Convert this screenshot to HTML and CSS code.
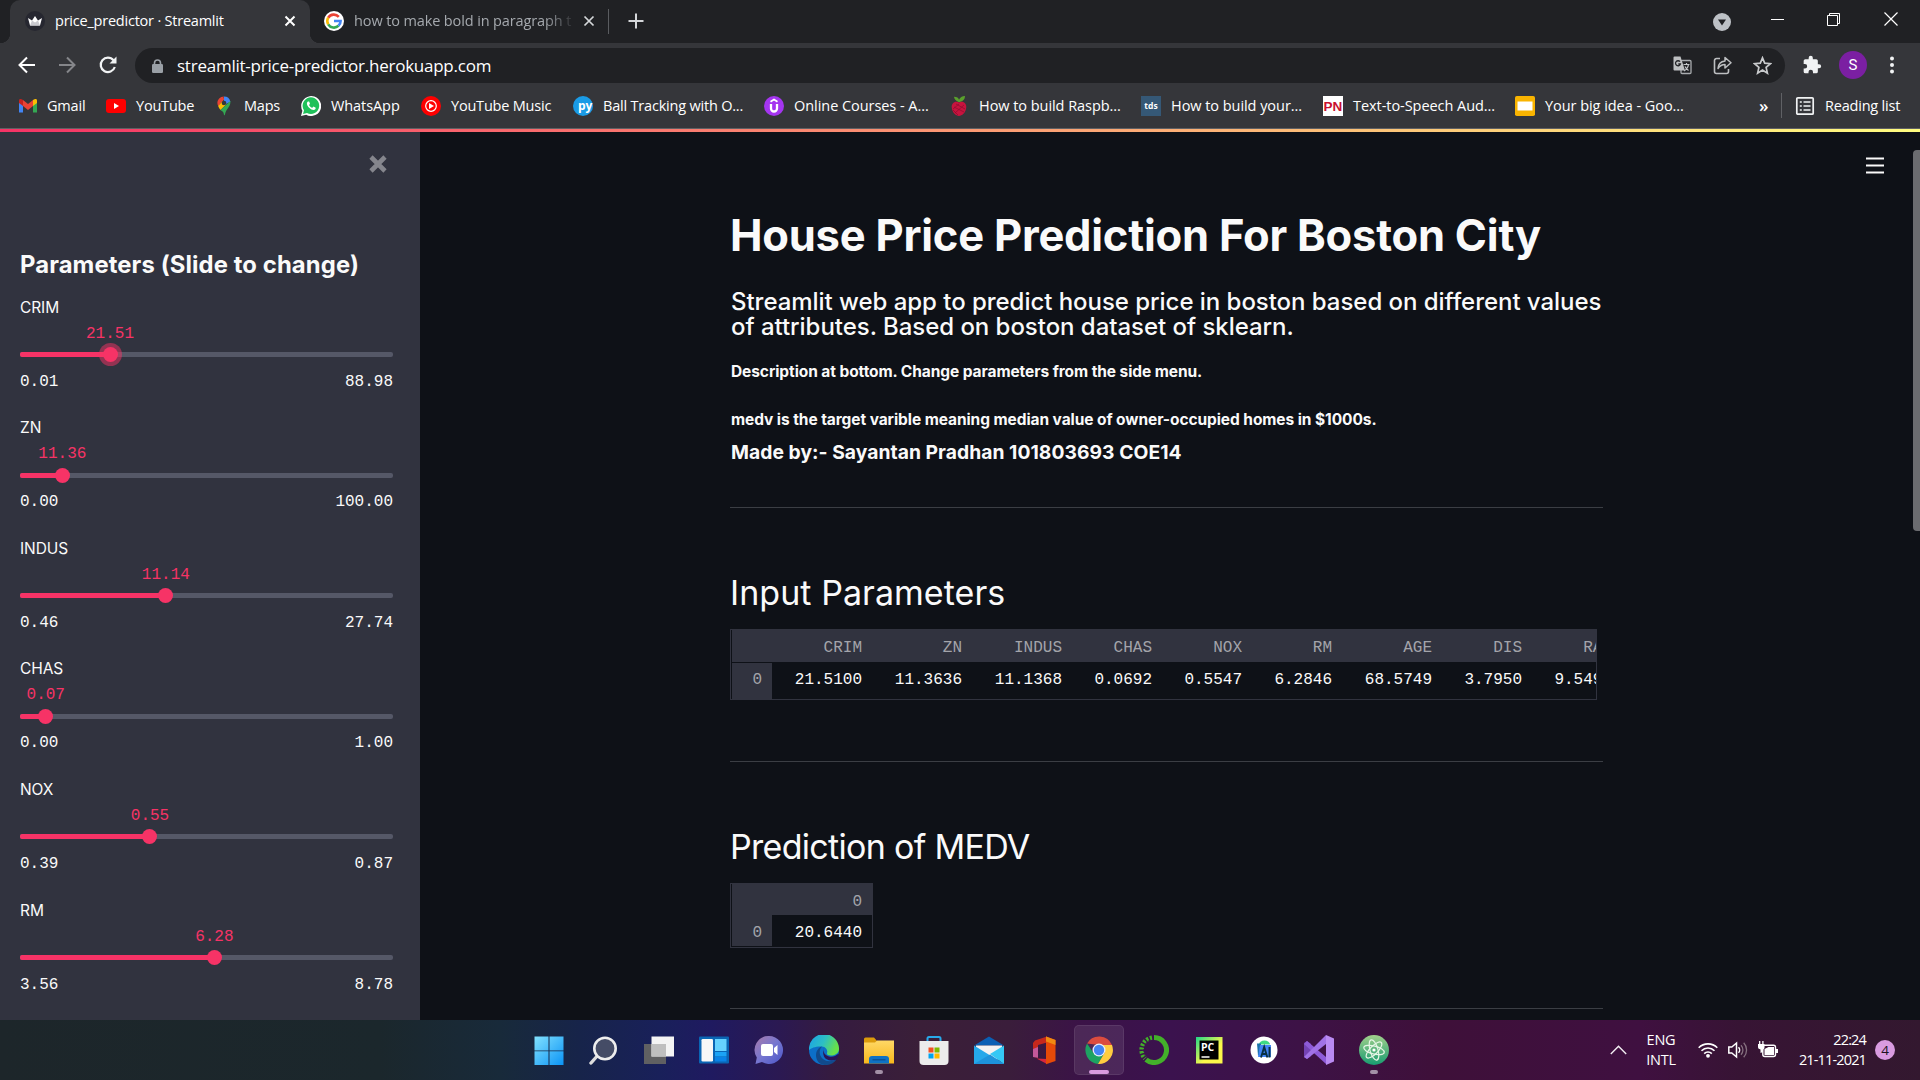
FILE: index.html
```html
<!DOCTYPE html>
<html lang="en">
<head>
<meta charset="utf-8">
<title>price_predictor · Streamlit</title>
<link rel="stylesheet" href="styles.css">
</head>
<body>
<header class="tabs">
  <div class="tab tab-active">
    <svg class="favicon" viewBox="0 0 20 20"><circle cx="10" cy="10" r="10" fill="#262730"/><path d="M3 7l4 2.500 3-4.500 3 4.500 4-2.500-2 7.500H5z" fill="#fff"/><path d="M5 14.500l2-5 3 2 3-2 2 5z" fill="#c9c9cf"/></svg>
    <span class="tab-title">price_predictor · Streamlit</span>
    <svg class="tab-close" viewBox="0 0 12 12"><path d="M1.500 1.500l9 9M10.500 1.500l-9 9" stroke="#fff" stroke-width="2"/></svg>
  </div>
  <div class="tab tab-idle">
    <svg class="favicon" viewBox="0 0 20 20"><circle cx="10" cy="10" r="10" fill="#fff"/><path d="M14.800 5.800A6.700 6.700 0 0 0 4.200 6.700" stroke="#ea4335" stroke-width="2.600" fill="none"/><path d="M4.200 6.700a6.700 6.700 0 0 0 0 6.600" stroke="#fbbc05" stroke-width="2.600" fill="none"/><path d="M4.200 13.300a6.700 6.700 0 0 0 10.300 1.500" stroke="#34a853" stroke-width="2.600" fill="none"/><path d="M14.500 14.800A6.500 6.500 0 0 0 16.600 10H10" stroke="#4285f4" stroke-width="2.600" fill="none"/></svg>
    <span class="tab-title">how to make bold in paragraph t</span>
    <svg class="tab-close" viewBox="0 0 12 12"><path d="M1.500 1.500l9 9M10.500 1.500l-9 9" stroke="#d5d7da" stroke-width="1.700"/></svg>
  </div>
  <i class="tab-divider"></i>
  <svg class="tab-new" viewBox="0 0 16 16"><path d="M8 .5v15M.5 8h15" stroke="#d5d7da" stroke-width="2"/></svg>
  <div class="window-controls">
    <svg width="18" height="18" viewBox="0 0 18 18"><circle cx="9" cy="9" r="9" fill="#bdc1c6"/><path d="M5 6.500h8l-4 6z" fill="#202124"/></svg>
    <svg class="raised" width="13" height="14" viewBox="0 0 13 14"><path d="M0 7.500h13" stroke="#fff"/></svg>
    <svg class="raised" width="13" height="13" viewBox="0 0 13 13"><path d="M.5 2.500h10v10H.5zM2.500 2.500v-2h10v10h-2" fill="none" stroke="#fff"/></svg>
    <svg class="raised" width="14" height="14" viewBox="0 0 14 14"><path d="M.5.5l13 13M13.500.5l-13 13" stroke="#fff" stroke-width="1.200"/></svg>
  </div>
</header>

<div class="toolbar">
  <div class="nav-buttons">
    <svg width="18" height="18" viewBox="0 0 18 18"><path d="M17 9H2M9 1.500L1.500 9 9 16.500" fill="none" stroke="#fff" stroke-width="2"/></svg>
    <svg width="18" height="18" viewBox="0 0 18 18"><path d="M1 9h15M9 1.500L16.500 9 9 16.500" fill="none" stroke="#85868a" stroke-width="2"/></svg>
    <svg width="20" height="20" viewBox="0 0 20 20"><path d="M16.800 12A7.200 7.200 0 1 1 15.500 5.300" fill="none" stroke="#f1f3f4" stroke-width="2.200"/><path d="M18.500 1.500v7h-7z" fill="#f1f3f4"/></svg>
  </div>
  <div class="omnibox">
    <svg class="lock" viewBox="0 0 11 14"><path d="M2.500 6V4a3 3 0 0 1 6 0v2" fill="none" stroke="#9aa0a6" stroke-width="1.600"/><rect y="5" width="11" height="9" rx="1.300" fill="#9aa0a6"/></svg>
    <span class="url">streamlit-price-predictor.herokuapp.com</span>
    <svg width="19" height="19" viewBox="0 0 19 19"><rect x="8" y="4.500" width="10" height="13" rx="1" fill="#202124" stroke="#a9acaf" stroke-width="1.300"/><path d="M10.500 8.500h6M13.500 7v1.500M15.500 8.500c-.5 3-2 5-4.500 6.500M12 10.500c1 2 2 3 3.500 4" stroke="#c4c6c9" stroke-width="1.200" fill="none"/><path d="M1.500.5h6L12 14.500H1.500A1 1 0 0 1 .5 13.500v-12a1 1 0 0 1 1-1z" fill="#bdbfc1"/><path d="M7 5.700A2.500 2.500 0 1 0 7.400 8H5.300" fill="none" stroke="#26272a" stroke-width="1.300"/></svg>
    <svg width="19" height="19" viewBox="0 0 19 19"><path d="M7 2.500H3.500a2 2 0 0 0-2 2v11a2 2 0 0 0 2 2h10a2 2 0 0 0 2-2V13" fill="none" stroke="#bdbfc1" stroke-width="1.600"/><path d="M5 12.500c.3-5 3-7 7-7.500V1.500l6 5.300-6 5.200V8.500c-3 0-5 1-7 4z" fill="none" stroke="#bdbfc1" stroke-width="1.500" stroke-linejoin="round"/></svg>
    <svg width="19" height="19" viewBox="0 0 19 19"><path d="M9.500 1.800l2.200 5.300 5.800.5-4.400 3.800 1.300 5.700-4.900-3-4.900 3 1.300-5.700-4.400-3.800 5.800-.5z" fill="none" stroke="#c8cacc" stroke-width="1.700"/></svg>
  </div>
  <div class="toolbar-end">
    <svg width="20" height="20" viewBox="0 0 24 24"><path d="M20.500 11H19V7a2 2 0 0 0-2-2h-4V3.500a2.500 2.500 0 0 0-5 0V5H4a2 2 0 0 0-2 2v3.800h1.500a2.700 2.700 0 0 1 0 5.400H2V20a2 2 0 0 0 2 2h3.800v-1.500a2.700 2.700 0 0 1 5.400 0V22H17a2 2 0 0 0 2-2v-4h1.500a2.500 2.500 0 0 0 0-5z" fill="#f1f3f4"/></svg>
    <span class="avatar">S</span>
    <svg width="4" height="18" viewBox="0 0 4 18"><circle cx="2" cy="2.500" r="2" fill="#f1f3f4"/><circle cx="2" cy="9" r="2" fill="#f1f3f4"/><circle cx="2" cy="15.500" r="2" fill="#f1f3f4"/></svg>
  </div>
</div>

<nav class="bookmarks">
  <a class="bm bm-gmail"><svg viewBox="0 0 20 20"><path d="M1 4.500v12h4V9z" fill="#4285f4"/><path d="M19 4.500v12h-4V9z" fill="#34a853"/><path d="M5 4v6l5 4 5-4V4l-5 4z" fill="#ea4335"/><path d="M1 7V4.500C1 2.500 3 2.500 5 4v6z" fill="#c5221f"/><path d="M19 7V4.500c0-2-2-2-4-.5v6z" fill="#fbbc04"/></svg>Gmail</a>
  <a class="bm bm-youtube"><svg viewBox="0 0 20 20"><rect y="3" width="20" height="14" rx="3" fill="#f00"/><path d="M8 7l5 3-5 3z" fill="#fff"/></svg>YouTube</a>
  <a class="bm bm-maps"><svg viewBox="0 0 20 20"><path d="M10 .5A6.500 6.500 0 0 0 5 2.800l3 2.700z" fill="#ea4335"/><path d="M5 2.800A6.500 6.500 0 0 0 4.300 10.200l7-8.200z" fill="#ea4335"/><path d="M10 .5a6.500 6.500 0 0 1 6.400 5.200L10 9z" fill="#4285f4"/><path d="M4.200 10l4.500-5 3.500 3.500L6.500 14c-1-1.300-2-2.700-2.300-4z" fill="#fbbc04"/><path d="M6.500 14L16.300 5c.8 5-3.800 7.500-5 12-.5 2.800-1.200 3.300-1.700 0-.5-1.500-2-2-3.100-3z" fill="#34a853"/><circle cx="10" cy="7" r="2.300" fill="#35363a"/></svg>Maps</a>
  <a class="bm bm-whatsapp"><svg viewBox="0 0 20 20"><path d="M0 20l1.400-5.200A10 10 0 1 1 5.200 18.700z" fill="#fff"/><path d="M2 18l1-3.700A8.300 8.300 0 1 1 6 17z" fill="#1fc15a"/><path d="M7 5.500c-2 1.200-1 4.200 1.200 6.300 2.500 2.400 5 3 6.300 1.200l.2-1.300-2.200-1.200-1.200 1.300c-1.500-.5-2.600-1.600-3.200-2.900l.9-1.200-.9-2.200z" fill="#fff"/></svg>WhatsApp</a>
  <a class="bm bm-ytmusic"><svg viewBox="0 0 20 20"><circle cx="10" cy="10" r="10" fill="#f00"/><circle cx="10" cy="10" r="5.300" fill="none" stroke="#fff" stroke-width="1.200"/><path d="M8 7l5 3-5 3z" fill="#fff"/></svg>YouTube Music</a>
  <a class="bm bm-ball"><svg viewBox="0 0 20 20"><circle cx="10" cy="10" r="10" fill="#1a9be6"/><text x="5" y="13.500" class="glyph glyph-py">py</text></svg>Ball Tracking with O...</a>
  <a class="bm bm-udemy bm-loose"><svg viewBox="0 0 20 20"><circle cx="10" cy="10" r="10" fill="#a435f0"/><path d="M6.500 5.800L10 3.600l3.500 2.200" fill="none" stroke="#fff" stroke-width="1.800"/><path d="M7 8v4.500a3 3 0 0 0 6 0V8" fill="none" stroke="#fff" stroke-width="2.300"/></svg>Online Courses - A...</a>
  <a class="bm bm-raspb bm-loose"><svg viewBox="0 0 20 20"><path d="M9.500 6C7 5 5 3 5 .8c3 0 4.500 1 5 3C11 1.500 13 0 16 0c0 3.500-2.500 6-6.500 6z" fill="#5aa02c"/><path d="M10 6.500c4 -2 8 1 7.200 5.500C16.500 17 13 19.800 10 20c-3-.2-6.500-3-7.200-8C2 7.500 6 4.500 10 6.500z" fill="#c7133e"/><path d="M5 11l10 5M4 14l5 5M7 8l9 5M15 9l-9 8M10 8l-6 5" stroke="#8d0c2e" stroke-width=".7"/></svg>How to build Raspb...</a>
  <a class="bm bm-tds bm-loose"><svg viewBox="0 0 20 20"><path d="M0 0h20v20H0z" fill="#355876"/><text x="10" y="13" text-anchor="middle" class="glyph glyph-tds">tds</text></svg>How to build your...</a>
  <a class="bm bm-pn bm-loose"><svg viewBox="0 0 20 20"><path d="M0 0h20v20H0z" fill="#fff"/><text x="10" y="14.800" text-anchor="middle" class="glyph glyph-pn">PN</text></svg>Text-to-Speech Aud...</a>
  <a class="bm bm-slides bm-loose"><svg viewBox="0 0 20 20"><rect width="20" height="20" rx="1.800" fill="#f9b400"/><path d="M2.500 5.500h15v9h-15z" fill="#fff"/></svg>Your big idea - Goo...</a>
  <span class="bm-more">»</span>
  <i class="bm-divider"></i>
  <a class="bm"><svg viewBox="0 0 20 20"><rect x="1.800" y="1.800" width="16.400" height="16.400" rx="1" fill="none" stroke="#f1f3f4" stroke-width="1.700"/><path d="M4.800 6h2M4.800 10h2M4.800 14h2M8.500 6h7M8.500 10h7M8.500 14h7" stroke="#f1f3f4" stroke-width="1.600"/></svg>Reading list</a>
</nav>
<div class="decoration"></div>

<div class="app">
  <aside class="sidebar">
    <div class="sidebar-top"><svg class="sidebar-close" viewBox="0 0 18 18"><path d="M2 2l14 14M16 2L2 16" stroke="#85868d" stroke-width="4.600"/></svg></div>
    <h2 class="sidebar-title">Parameters (Slide to change)</h2>
    <div class="slider" style="--pos:24.13%"><div class="slider-label">CRIM</div><div class="slider-value">21.51</div><div class="track"><i class="fill"></i><i class="thumb thumb-focus"></i></div><div class="range"><span>0.01</span><span>88.98</span></div></div>
    <div class="slider" style="--pos:11.35%"><div class="slider-label">ZN</div><div class="slider-value">11.36</div><div class="track"><i class="fill"></i><i class="thumb"></i></div><div class="range"><span>0.00</span><span>100.00</span></div></div>
    <div class="slider" style="--pos:39.1%"><div class="slider-label">INDUS</div><div class="slider-value">11.14</div><div class="track"><i class="fill"></i><i class="thumb"></i></div><div class="range"><span>0.46</span><span>27.74</span></div></div>
    <div class="slider" style="--pos:6.9%"><div class="slider-label">CHAS</div><div class="slider-value">0.07</div><div class="track"><i class="fill"></i><i class="thumb"></i></div><div class="range"><span>0.00</span><span>1.00</span></div></div>
    <div class="slider" style="--pos:34.85%"><div class="slider-label">NOX</div><div class="slider-value">0.55</div><div class="track"><i class="fill"></i><i class="thumb"></i></div><div class="range"><span>0.39</span><span>0.87</span></div></div>
    <div class="slider" style="--pos:52.1%"><div class="slider-label">RM</div><div class="slider-value">6.28</div><div class="track"><i class="fill"></i><i class="thumb"></i></div><div class="range"><span>3.56</span><span>8.78</span></div></div>
  </aside>
  <main class="content">
    <h1>House Price Prediction For Boston City</h1>
    <p class="lead">Streamlit web app to predict house price in boston based on different values<br>of attributes. Based on boston dataset of sklearn.</p>
    <p class="note">Description at bottom. Change parameters from the side menu.</p>
    <p class="note note-target">medv is the target varible meaning median value of owner-occupied homes in $1000s.</p>
    <p class="author">Made by:- Sayantan Pradhan 101803693 COE14</p>
    <hr class="rule rule-intro">
    <h2 class="section-title">Input Parameters</h2>
    <div class="frame frame-input">
      <div class="row row-head"><span></span><span>CRIM</span><span>ZN</span><span>INDUS</span><span>CHAS</span><span>NOX</span><span>RM</span><span>AGE</span><span>DIS</span><span>RAD</span></div>
      <div class="row row-data"><span class="index">0</span><span>21.5100</span><span>11.3636</span><span>11.1368</span><span>0.0692</span><span>0.5547</span><span>6.2846</span><span>68.5749</span><span>3.7950</span><span>9.5494</span></div>
    </div>
    <hr class="rule rule-input">
    <h2 class="section-title section-medv">Prediction of MEDV</h2>
    <div class="frame frame-medv">
      <div class="row row-head"><span></span><span>0</span></div>
      <div class="row row-data"><span class="index">0</span><span>20.6440</span></div>
    </div>
    <hr class="rule rule-medv">
  </main>
  <div class="menu-column"><svg width="18" height="17" viewBox="0 0 18 17"><path d="M0 1.500h18M0 8.500h18M0 15.500h18" stroke="#fafafa" stroke-width="2.200"/></svg></div>
  <div class="scrollbar"><i></i></div>
</div>

<footer class="taskbar">
  <div class="dock">
    <span class="slot"><svg viewBox="0 0 30 30"><defs><linearGradient id="win" gradientUnits="userSpaceOnUse" x1="0" y1="0" x2="30" y2="30"><stop stop-color="#86e4ff"/><stop offset="1" stop-color="#0a93f5"/></linearGradient></defs><path d="M.5 1.500h14v14H.5zM15.500 1.500h14v14h-14zM.5 16.300h14v14H.5zM15.500 16.300h14v14h-14z" fill="url(#win)"/></svg></span>
    <span class="slot"><svg viewBox="0 0 30 30"><path d="M9.500 19.500L2 28" stroke="#ddd" stroke-width="3.400" stroke-linecap="round"/><circle cx="16" cy="13.500" r="10.700" fill="#454c66" stroke="#eee" stroke-width="2.600"/></svg></span>
    <span class="slot"><svg viewBox="0 0 30 30"><path d="M0 9h22v20H0z" fill="#606062"/><path d="M7.500 1.500H30v20H7.500z" fill="#f4f4f4"/><path d="M7.500 9H22v12.500H7.500z" fill="#bfbfbf"/></svg></span>
    <span class="slot"><svg viewBox="0 0 30 30"><rect y="1.500" width="30" height="27" rx="1" fill="#0a65b4"/><rect x="2.500" y="4" width="11.500" height="22.500" rx="1.300" fill="#f7f7f7"/><path d="M16 4h11.500v12H16z" fill="#66d2ff"/><path d="M16 17h11.500v4.500H16z" fill="#1ba3f5"/><path d="M16 22h11.500v4.500H16z" fill="#0a83e6"/></svg></span>
    <span class="slot"><svg viewBox="0 0 30 30"><defs><linearGradient id="chat" x2="1" y2="1"><stop stop-color="#a97aa9"/><stop offset=".5" stop-color="#7676d0"/><stop offset="1" stop-color="#4a55c8"/></linearGradient></defs><path d="M15 1a14 14 0 1 1-7 26.100L1.500 29l1.300-6.500A14 14 0 0 1 15 1z" fill="url(#chat)"/><rect x="7" y="9" width="12" height="12" rx="2" fill="#fff"/><path d="M20 13l3.500-3v10L20 17z" fill="#fff"/></svg></span>
    <span class="slot"><svg viewBox="0 0 30 30"><defs><linearGradient id="edge" x2="1" y2=".35"><stop stop-color="#1aa0e8"/><stop offset=".55" stop-color="#2dbfc4"/><stop offset="1" stop-color="#67e04a"/></linearGradient></defs><circle cx="15" cy="15" r="15" fill="#0c6fc8"/><path d="M0 15A15 15 0 0 1 30 13c.5 5-4 7.500-8 7.500-3 0-4.500-1-4-2.500 1-3-1-6-5-6.500C7 11 2 13 0 15z" fill="url(#edge)"/><path d="M13 11.500c-3 3-3.500 9 1 12.500 4 3 9 2.500 13.500.5C24 29.500 18 31 13 29.500 5 26 5 14 13 11.500z" fill="#114a8b"/><path d="M15.500 12c-2 3-1 8 4.500 9.500 3.500.8 7-.5 9-2.500l1 .5-2.500 5c-6 2-11 .5-12.500-3-1.500-3.500-.8-7 .5-9.500z" fill="#2a1457"/></svg></span>
    <span class="slot"><svg viewBox="0 0 30 30"><defs><linearGradient id="dir" x2="0" y2="1"><stop stop-color="#ffd866"/><stop offset="1" stop-color="#f8b81c"/></linearGradient></defs><path d="M0 4a1.500 1.500 0 0 1 1.500-1.500H10L13 6v6H0z" fill="#dc9b0b"/><path d="M0 7.500h11l2-2h17v23H0z" fill="url(#dir)"/><path d="M5 28.500V24a3 3 0 0 1 3-3h14a3 3 0 0 1 3 3v4.500z" fill="#0f72c4"/><path d="M8.500 24.800h13" stroke="#0a4c8e" stroke-width="1.200"/></svg><i class="dot"></i></span>
    <span class="slot"><svg viewBox="0 0 30 30"><path d="M8.500 8V3.500a1.500 1.500 0 0 1 1.500-1.500h10a1.500 1.500 0 0 1 1.500 1.500V8" fill="none" stroke="#28a9ea" stroke-width="2"/><path d="M.5 6h29v20a4 4 0 0 1-4 4h-21a4 4 0 0 1-4-4z" fill="#ececec"/><path d="M9.500 12.500h5v5h-5z" fill="#f25022"/><path d="M15.500 12.500h5v5h-5z" fill="#7fba00"/><path d="M9.500 18.500h5v5h-5z" fill="#00a4ef"/><path d="M15.500 18.500h5v5h-5z" fill="#ffb900"/></svg></span>
    <span class="slot"><svg viewBox="0 0 30 30"><path d="M0 10.500L15 1.500l15 9z" fill="#0a5fb4"/><path d="M2 10.500h26v14H2z" fill="#f2f2f2"/><path d="M0 10.500l30 18.500H0z" fill="#25a8ea"/><path d="M30 10.500v18.500L16 19z" fill="#35c8f5"/><path d="M0 29l16-9.500L30 29z" fill="#1d93dc"/></svg></span>
    <span class="slot"><svg viewBox="0 0 30 30"><path d="M18 1.500L6 5.500 4 8v14l5 .5V10l9-2.500z" fill="#c6281c"/><path d="M4 14v8l5 .8V12z" fill="#c4589a"/><path d="M7.500 23.500L18 29V24z" fill="#d8263c"/><path d="M17 1.500L26.500 5v21L17 29.300z" fill="#e64a08"/><path d="M17 1.500L26.500 5v5L17 6.500z" fill="#f08a12"/></svg></span>
    <span class="slot slot-active"><svg viewBox="0 0 30 30"><path d="M3 8.500A14 14 0 0 1 28 10H15z" fill="#db4c3f"/><path d="M3 8.500A14 14 0 0 0 14 29l6-10.500L9.500 18z" fill="#1da362"/><path d="M28 10a14 14 0 0 1-14 19l7-12-2-7z" fill="#ffcd40"/><circle cx="15" cy="15" r="6.500" fill="#e9eefb"/><circle cx="15" cy="15" r="5.200" fill="#4285f4"/></svg><i class="pill"></i></span>
    <span class="slot"><svg viewBox="0 0 30 30"><path d="M15 2.500A12.500 12.500 0 1 1 7 24.600" fill="none" stroke="#43b02a" stroke-width="5"/><path d="M13 2.600A12.500 12.500 0 0 0 6 23.500" fill="none" stroke="#43b02a" stroke-width="4.500" stroke-dasharray="2.200 1.500"/><path d="M11 5A11.500 11.500 0 0 0 6 21" fill="none" stroke="#3b124e" stroke-width="1" stroke-dasharray="2 2"/></svg></span>
    <span class="slot"><svg viewBox="0 0 30 30"><defs><linearGradient id="pyc" x2=".6" y2=".6"><stop stop-color="#21d789"/><stop offset="1" stop-color="#fcf84a"/></linearGradient></defs><path d="M2 2h26.500v26.500H2z" fill="url(#pyc)"/><path d="M5.500 5.500h19v19h-19z" fill="#000"/><text x="7" y="15.500" class="glyph glyph-pc">PC</text><path d="M7.500 22h8" stroke="#fff" stroke-width="1.500"/></svg></span>
    <span class="slot"><svg viewBox="0 0 30 30"><circle cx="15" cy="15" r="13.500" fill="#fff"/><path d="M10 9.500a5.500 4 0 0 1 11 0z" fill="#3ddc84"/><path d="M8 8.500h4v12H9z" fill="#1a73a8"/><path d="M11 10h11v12H9z" fill="#4285f4"/><path d="M12 22.500l3.200-10.500 3.200 10.500M13.200 19h4M20.500 12v10.500" stroke="#073042" stroke-width="1.900" fill="none"/></svg></span>
    <span class="slot"><svg viewBox="0 0 30 30"><path d="M0 8l3-2 4 3v12l-4 3-3-2z" fill="#7443b5"/><path d="M3 6l19 16v7L0 9z" fill="#8e5bd8"/><path d="M22 0v9L3 24l-3-2z" fill="#a172e6"/><path d="M22 0l8 3.500v23L22 30z" fill="#b98af2"/></svg></span>
    <span class="slot"><svg viewBox="0 0 30 30"><defs><linearGradient id="atom" x2="0" y2="1"><stop stop-color="#a2d08c"/><stop offset="1" stop-color="#179c70"/></linearGradient></defs><circle cx="15" cy="15" r="15" fill="url(#atom)"/><g fill="none" stroke="#e6f5e6" stroke-width="1.200"><ellipse cx="15" cy="15" rx="10.500" ry="4" transform="rotate(14 15 15)"/><ellipse cx="15" cy="15" rx="10.500" ry="4" transform="rotate(74 15 15)"/><ellipse cx="15" cy="15" rx="10.500" ry="4" transform="rotate(134 15 15)"/></g><circle cx="15" cy="15" r="1.600" fill="#fff"/></svg><i class="dot"></i></span>
  </div>
  <div class="tray">
    <svg class="tray-up" width="17" height="10" viewBox="0 0 17 10"><path d="M.8 9L8.500 1.200 16.200 9" fill="none" stroke="#f2eef2" stroke-width="1.400"/></svg>
    <div class="lang">ENG<br>INTL</div>
    <svg class="tray-wifi" width="20" height="16" viewBox="0 0 20 16"><g fill="none" stroke="#fff" stroke-width="1.600"><path d="M.7 5.800a13 13 0 0 1 18.600 0"/><path d="M3.500 8.800a9 9 0 0 1 13 0"/><path d="M6.200 11.600a5.200 5.200 0 0 1 7.600 0"/></g><circle cx="10" cy="13.800" r="1.900" fill="#fff"/></svg>
    <svg class="tray-sound" width="20" height="18" viewBox="0 0 20 18"><path d="M.8 6h3L8.500 2v14L3.800 12h-3z" fill="none" stroke="#fff" stroke-width="1.500"/><path d="M10.500 6.200a4 4 0 0 1 0 5.600" fill="none" stroke="#fff" stroke-width="1.500"/><path d="M13 4.200a7 7 0 0 1 0 9.600M15.700 1.800a10.500 10.500 0 0 1 0 14.400" fill="none" stroke="#85707f" stroke-width="1.300"/></svg>
    <svg class="tray-battery" width="20" height="18" viewBox="0 0 20 18"><rect x="4.800" y="4.200" width="12.700" height="11.300" rx="2" fill="none" stroke="#fff" stroke-width="1.400"/><path d="M6.500 8l4-2H16v8H6.500z" fill="#fff"/><path d="M18 8h2v4h-2z" fill="#fff"/><path d="M0 3h6.500v3.500a2 2 0 0 1-1.500 2V11l-2.500 1V8.500C1 8 0 7.500 0 6z" fill="#fff"/><path d="M1.700 0v3M4.900 0v3" stroke="#fff" stroke-width="1.300"/></svg>
    <div class="clock">22:24<br>21-11-2021</div>
    <span class="badge">4</span>
  </div>
</footer>
</body>
</html>
```
FILE: styles.css
```css
* { box-sizing: border-box; }
body {
  margin: 0;
  width: 1920px;
  height: 1080px;
  overflow: hidden;
  display: flex;
  flex-direction: column;
  background: #0e1117;
  color: #fafafa;
  font-family: Inter, sans-serif;
}
svg { display: block; flex: none; }
h1, h2, p { margin: 0; }

/* Tab strip */
.tabs {
  height: 43px;
  flex: none;
  display: flex;
  align-items: center;
  padding-left: 10px;
  background: #202124;
  font: 14.5px/20px "Open Sans", sans-serif;
}
.tab { display: flex; align-items: center; height: 43px; padding-bottom: 1px; }
.tab-active {
  position: relative;
  width: 300px;
  padding: 0 14px 1px 15px;
  background: #35363a;
  border-radius: 10px 10px 0 0;
  color: #fff;
}
.tab-active::before, .tab-active::after {
  content: "";
  position: absolute;
  bottom: 0;
  width: 10px;
  height: 10px;
}
.tab-active::before { left: -10px; background: radial-gradient(circle at 0 0, transparent 10px, #35363a 10.5px); }
.tab-active::after { right: -10px; background: radial-gradient(circle at 100% 0, transparent 10px, #35363a 10.5px); }
.tab-idle { width: 284px; padding-left: 14px; color: #a5a9ae; }
.favicon { width: 20px; height: 20px; margin-right: 10px; }
.tab-title { flex: 1; white-space: nowrap; overflow: hidden; letter-spacing: -.22px; }
.tab-idle .tab-title {
  flex: none;
  width: 219px;
  letter-spacing: -.12px;
  -webkit-mask-image: linear-gradient(90deg, #000 190px, transparent 222px);
  mask-image: linear-gradient(90deg, #000 190px, transparent 222px);
}
.tab-close { width: 12px; height: 12px; }
.tab-idle .tab-close { margin-left: 10px; }
.tab-divider { width: 1px; height: 25px; margin-left: 14px; background: #5a5c60; }
.tab-new { width: 16px; height: 16px; margin: 0 0 1px 19px; }
.window-controls { display: flex; align-items: center; margin-left: auto; padding-right: 22px; }
.window-controls svg + svg { margin-left: 43px; }
.window-controls svg:nth-child(2) { margin-left: 40px; }
.window-controls svg:nth-child(4) { margin-left: 44px; }
.raised { margin-bottom: 5px; }

/* Address bar */
.toolbar {
  height: 43px;
  flex: none;
  display: flex;
  align-items: center;
  background: #35363a;
}
.nav-buttons { display: flex; align-items: center; gap: 22px; width: 135px; padding-left: 18px; }
.omnibox {
  display: flex;
  align-items: center;
  gap: 21px;
  width: 1650px;
  height: 35px;
  margin-top: 2px;
  padding: 0 13px 0 17px;
  border-radius: 18px;
  background: #202124;
}
.lock { width: 11px; height: 14px; }
.url {
  flex: 1;
  margin-left: -7px;
  font: 17px/24px "Open Sans", sans-serif;
  letter-spacing: -.24px;
  color: #fff;
}
.toolbar-end { display: flex; align-items: center; padding-left: 17px; }
.avatar {
  width: 28px;
  height: 28px;
  margin: 0 23px 0 17px;
  border-radius: 50%;
  background: #7b1fa2;
  color: #fff;
  font: 15px/28px Roboto, sans-serif;
  text-align: center;
}

/* Bookmarks */
.bookmarks {
  height: 43px;
  flex: none;
  display: flex;
  align-items: center;
  padding: 0 0 3px 18px;
  border-bottom: 1px solid #5f6063;
  background: #35363a;
  font: 14.5px/20px "Open Sans", sans-serif;
  letter-spacing: -.2px;
  color: #fff;
}
.bm { display: flex; align-items: center; white-space: nowrap; }
.bm svg { width: 20px; height: 20px; margin-right: 10px; }
.bm-loose { letter-spacing: -.05px; }
.bm-gmail { width: 88px; }
.bm-gmail svg { margin-right: 9px; }
.bm-youtube { width: 108px; }
.bm-maps { width: 87px; }
.bm-whatsapp { width: 120px; letter-spacing: -.08px; }
.bm-ytmusic { width: 152px; }
.bm-ball { width: 191px; }
.bm-udemy { width: 185px; }
.bm-raspb { width: 192px; }
.bm-tds { width: 182px; }
.bm-pn { width: 192px; }
.bm-slides { width: 244px; }
.bm-more { width: 22px; font-size: 17px; font-weight: 600; line-height: 18px; }
.bm-divider { width: 1px; height: 25px; margin-right: 13px; background: #606165; }
.glyph { font-family: "Open Sans", sans-serif; font-weight: 700; fill: #fff; letter-spacing: 0; }
.glyph-py { font-size: 12px; }
.glyph-tds { font-size: 8.5px; }
.glyph-pn { font: 700 13.5px "Liberation Sans", sans-serif; fill: #c8102e; }
.glyph-pc { font-size: 10.5px; }
.decoration { height: 3px; flex: none; background: linear-gradient(90deg, #f63366, #fffd80); }

/* Application viewport */
.app { height: 888px; flex: none; display: flex; overflow: hidden; }
.sidebar { width: 420px; flex: none; padding: 0 27px 0 20px; background: #31333f; }
.sidebar-top { height: 118px; padding: 23px 6px 0 0; }
.sidebar-close { width: 18px; height: 18px; margin-left: auto; }
.sidebar-title {
  height: 30px;
  margin-bottom: 17.6px;
  font-size: 23.8px;
  font-weight: 700;
  line-height: 30px;
  letter-spacing: .12px;
  white-space: nowrap;
}
.slider { height: 120.6px; font: 16px/20px "Liberation Mono", monospace; }
.slider-label { height: 20px; margin-bottom: 6px; font: 15.5px/20px Inter, sans-serif; letter-spacing: -.1px; }
.slider-value { width: max-content; height: 20px; margin: 0 0 8.4px var(--pos); transform: translateX(-50%); color: #f63366; }
.track { display: flex; align-items: center; height: 5px; margin-bottom: 14.7px; border-radius: 2px; background: #555867; }
.fill { flex: none; width: var(--pos); height: 5px; border-radius: 2px; background: #f63366; }
.thumb { flex: none; width: 15px; height: 15px; margin-left: -7.5px; border-radius: 50%; background: #f63366; }
.thumb-focus { box-shadow: 0 0 0 4px rgba(246, 51, 102, .5); }
.range { display: flex; justify-content: space-between; }

.content { width: 1183px; flex: none; padding: 75.5px 0 0 310px; white-space: nowrap; }
h1 { font-size: 43.5px; font-weight: 700; line-height: 54px; letter-spacing: -.22px; }
.lead { margin: 27.6px 0 23.4px; padding-left: 1px; font-size: 24px; font-weight: 500; line-height: 25px; letter-spacing: -.04px; }
.note { padding-left: 1px; font-size: 15.5px; font-weight: 700; line-height: 20px; letter-spacing: -.08px; }
.note-target { margin-top: 28px; }
.author { margin-top: 9.7px; padding-left: 1px; font-size: 19.3px; font-weight: 700; line-height: 24px; letter-spacing: .04px; }
.rule { height: 1px; margin: 0; border: 0; background: #3b3e44; }
.rule-intro { margin: 42.8px 0 64.2px; }
.rule-input { margin: 61px 0 64px; }
.rule-medv { margin-top: 60px; }
.section-title { height: 42px; font-size: 34px; font-weight: 400; line-height: 42px; letter-spacing: .05px; }
.section-medv { letter-spacing: -.7px; }
.frame { margin-top: 14.9px; padding-left: 1px; border: 1px solid #31333f; overflow: hidden; font: 16px/20px "Liberation Mono", monospace; }
.frame-input { width: 867px; height: 71px; }
.frame-medv { width: 143px; height: 65px; }
.row { display: grid; width: max-content; text-align: right; }
.frame-input .row { grid-template-columns: 40px repeat(3, 100px) repeat(3, 90px) 100px 90px 90px; }
.frame-medv .row { grid-template-columns: 40px 100px; }
.row span { padding-right: 10px; }
.row-head { height: 32px; padding-top: 2px; line-height: 32px; background: #31333f; color: #a3a4aa; }
.row-data { height: 37px; line-height: 36px; }
.frame-medv .row-head { height: 31px; }
.frame-medv .row-data { height: 31px; line-height: 36px; }
.index { background: #31333f; color: #a3a4aa; }
.frame-medv .index { height: 31px; }
.frame-input .index { border-top: 1px solid #0e1117; line-height: 34px; }

.menu-column { flex: 1; display: flex; justify-content: flex-end; padding: 25px 29px 0 0; }
.scrollbar { width: 7px; padding-top: 18px; }
.scrollbar i { display: block; height: 381px; border-radius: 4px 0 0 4px; background: #6b6c70; }

/* Taskbar */
.taskbar {
  height: 60px;
  flex: none;
  display: flex;
  align-items: center;
  padding-left: 521px;
  background: linear-gradient(90deg, #1d262a 0, #1b272c 380px, #182a3a 500px, #17244a 580px, #19205a 660px, #1f1a60 710px, #2b1952 780px, #351b40 830px, #3a1f38 920px, #3a1d3b 1010px, #3b1347 1080px, #3b124e 1170px, #3d1246 1300px, #3e1039 1440px, #3f1040 1640px, #371434 1740px, #33182f 1920px);
}
.dock { display: grid; grid-template-columns: repeat(16, 1fr); width: 880.5px; height: 60px; }
.slot { display: flex; align-items: center; justify-content: center; position: relative; }
.slot svg { width: 30px; height: 30px; }
.slot-active::before { content: ""; position: absolute; inset: 5px 2px 5px 3px; border: 1px solid rgba(255, 255, 255, .08); border-radius: 5px; background: rgba(255, 255, 255, .09); }
.slot-active svg { position: relative; }
.dot, .pill { position: absolute; bottom: 6px; left: 50%; width: 8px; height: 4px; margin-left: -4px; border-radius: 2px; background: #a390a6; }
.pill { width: 20px; margin-left: -10px; background: #d99be0; }
.tray { flex: 1; display: flex; align-items: center; font: 14.5px/20px "Open Sans", sans-serif; color: #fff; }
.tray-up { margin-left: 208.500px; }
.lang { width: 50px; margin-left: 9px; text-align: center; letter-spacing: -.2px; }
.tray-wifi { margin-left: 12px; }
.tray-sound { margin-left: 10px; }
.tray-battery { margin-left: 10px; }
.clock { width: 88px; text-align: right; letter-spacing: -.86px; }
.badge { width: 20px; height: 20px; margin-left: 9px; border-radius: 50%; background: #d99be0; color: #1d1420; font-size: 13.5px; text-align: center; }
```
